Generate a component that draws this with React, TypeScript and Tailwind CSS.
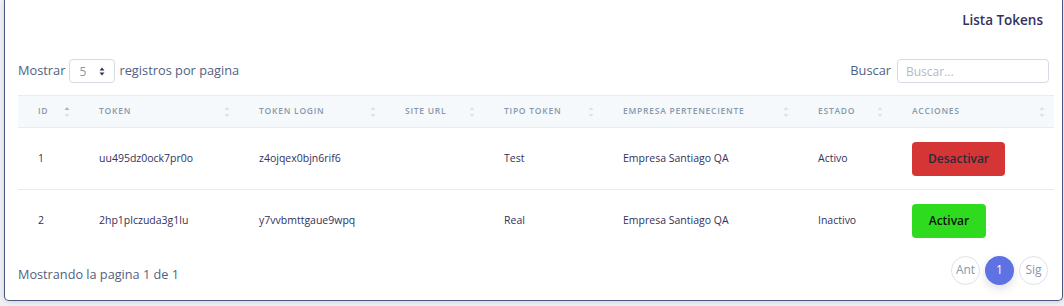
import React from 'react';

const COLUMNS = [
  { label: 'ID', width: 'w-[61px]', active: true },
  { label: 'Token', width: 'w-[160px]' },
  { label: 'Token Login', width: 'w-[146px]' },
  { label: 'Site URL', width: 'w-[99px]' },
  { label: 'Tipo Token', width: 'w-[119px]' },
  { label: 'Empresa Perteneciente', width: 'w-[195px]' },
  { label: 'Estado', width: 'w-[94px]' },
  { label: 'Acciones', width: 'w-[162px]' },
];

const TOKENS = [
  { id: 1, token: 'uu495dz0ock7pr0o', login: 'z4ojqex0bjn6rif6', site: '', tipo: 'Test', empresa: 'Empresa Santiago QA', estado: 'Activo' },
  { id: 2, token: '2hp1plczuda3g1lu', login: 'y7vvbmttgaue9wpq', site: '', tipo: 'Real', empresa: 'Empresa Santiago QA', estado: 'Inactivo' },
];

function SortIcon({ active }: { active?: boolean }) {
  return (
    <svg width="6" height="12" viewBox="0 0 6 12" className="shrink-0">
      <path d="M3 1 L5.5 4 L0.5 4 Z" fill={active ? '#aab4c3' : '#dde2ea'} />
      <path d="M3 11 L5.5 8 L0.5 8 Z" fill="#dde2ea" />
    </svg>
  );
}

export default function App() {
  return (
    <div className="min-h-screen bg-[#eef0f4] font-['Open_Sans',sans-serif]">
      <div className="ml-[4px] w-[1059px] h-[301px] bg-white border-x border-b border-[#4b5680] rounded-b-[5px] shadow-[0_1px_4px_rgba(50,50,93,0.15)] px-[13px]">
        {/* Title */}
        <div className="flex justify-end h-[41px] items-center pr-[6px]">
          <h3 className="text-[13.5px] font-semibold text-[#32325d]">Lista Tokens</h3>
        </div>

        {/* Length + search */}
        <div className="mt-[18px] flex items-center justify-between text-[12.8px] text-[#525f7f]">
          <div className="flex items-center gap-[4px]">
            <span>Mostrar</span>
            <div className="w-[46px] h-[24px] border border-[#d6dbe3] rounded-[4px] flex items-center justify-between pl-[9px] pr-[9px] text-[12px] text-[#8898aa]">
              <span className="mt-[2px]">5</span>
              <svg width="6" height="9" viewBox="0 0 6 9">
                <path d="M3 0.5 L5.5 3.5 L0.5 3.5 Z" fill="#32325d" />
                <path d="M3 8.5 L5.5 5.5 L0.5 5.5 Z" fill="#32325d" />
              </svg>
            </div>
            <span>registros por pagina</span>
          </div>
          <div className="flex items-center gap-[6px]">
            <span>Buscar</span>
            <input
              placeholder="Buscar..."
              className="w-[152px] h-[24px] border border-[#d6dbe3] rounded-[4px] px-[8px] text-[12px] text-[#525f7f] placeholder:text-[#b3bac6] outline-none"
            />
          </div>
        </div>

        {/* Table */}
        <table className="mt-[12px] w-[1036px] table-fixed border-collapse">
          <thead>
            <tr className="bg-[#f6f9fc] border-y border-[#e9ecef] h-[32px]">
              {COLUMNS.map((c) => (
                <th key={c.label} className={`${c.width} pl-[20px] pr-[9px] text-left`}>
                  <div className="flex items-center justify-between">
                    <span className="text-[8.5px] font-semibold uppercase tracking-[0.75px] text-[#8898aa]">{c.label}</span>
                    <SortIcon active={c.active} />
                  </div>
                </th>
              ))}
            </tr>
          </thead>
          <tbody className="text-[10.5px] text-[#32325d]">
            {TOKENS.map((t, i) => (
              <tr key={t.id} className={`h-[62px] ${i === 0 ? 'border-b border-[#e9ecef]' : ''}`}>
                <td className="pl-[20px]">{t.id}</td>
                <td className="pl-[20px]">{t.token}</td>
                <td className="pl-[20px]">{t.login}</td>
                <td className="pl-[20px]">{t.site}</td>
                <td className="pl-[20px]">{t.tipo}</td>
                <td className="pl-[20px]">{t.empresa}</td>
                <td className="pl-[20px]">{t.estado}</td>
                <td className="pl-[20px]">
                  {t.estado === 'Activo' ? (
                    <button className="w-[93px] h-[34px] rounded-[4px] bg-[#d63535] text-[12px] font-semibold text-[#2b2b3b]">
                      Desactivar
                    </button>
                  ) : (
                    <button className="w-[74px] h-[34px] rounded-[4px] bg-[#2edb1f] text-[12px] font-semibold text-[#111]">
                      Activar
                    </button>
                  )}
                </td>
              </tr>
            ))}
          </tbody>
        </table>

        {/* Footer */}
        <div className="mt-[4px] flex items-center justify-between pr-[1px]">
          <span className="text-[12.7px] text-[#525f7f] mt-[9px]">Mostrando la pagina 1 de 1</span>
          <div className="flex items-center gap-[5px]">
            <button className="w-[29px] h-[29px] rounded-full border border-[#dee2e6] text-[12px] text-[#8898aa]">Ant</button>
            <button className="w-[29px] h-[29px] rounded-full bg-[#5e72e4] text-[12px] text-white shadow-[0_4px_8px_rgba(50,50,93,0.15)]">1</button>
            <button className="w-[29px] h-[29px] rounded-full border border-[#dee2e6] text-[12px] text-[#8898aa]">Sig</button>
          </div>
        </div>
      </div>
    </div>
  );
}
